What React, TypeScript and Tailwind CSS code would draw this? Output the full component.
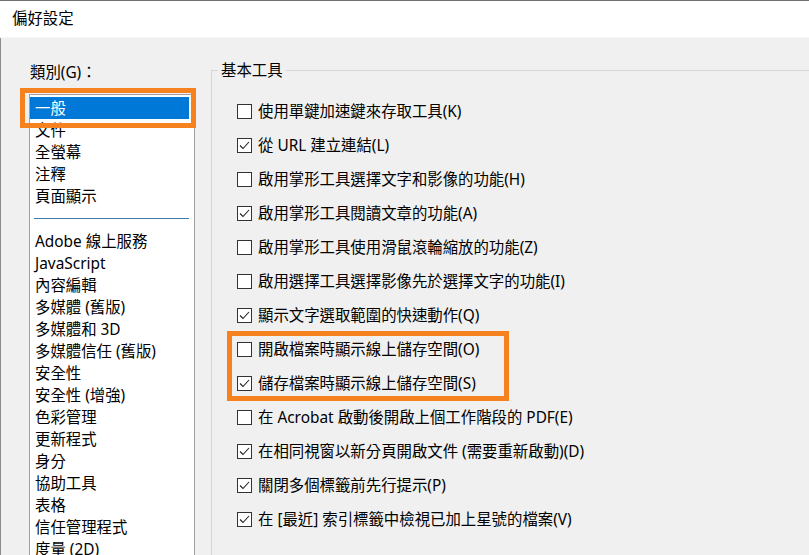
import React from "react";

const categories: (string | null)[] = [
  "一般",
  "文件",
  "全螢幕",
  "注釋",
  "頁面顯示",
  null,
  "Adobe 線上服務",
  "JavaScript",
  "內容編輯",
  "多媒體 (舊版)",
  "多媒體和 3D",
  "多媒體信任 (舊版)",
  "安全性",
  "安全性 (增強)",
  "色彩管理",
  "更新程式",
  "身分",
  "協助工具",
  "表格",
  "信任管理程式",
  "度量 (2D)",
];

interface Option {
  label: string;
  checked: boolean;
}

const options: Option[] = [
  { label: "使用單鍵加速鍵來存取工具(K)", checked: false },
  { label: "從 URL 建立連結(L)", checked: true },
  { label: "啟用掌形工具選擇文字和影像的功能(H)", checked: false },
  { label: "啟用掌形工具閱讀文章的功能(A)", checked: true },
  { label: "啟用掌形工具使用滑鼠滾輪縮放的功能(Z)", checked: false },
  { label: "啟用選擇工具選擇影像先於選擇文字的功能(I)", checked: false },
  { label: "顯示文字選取範圍的快速動作(Q)", checked: true },
  { label: "開啟檔案時顯示線上儲存空間(O)", checked: false },
  { label: "儲存檔案時顯示線上儲存空間(S)", checked: true },
  { label: "在 Acrobat 啟動後開啟上個工作階段的 PDF(E)", checked: false },
  { label: "在相同視窗以新分頁開啟文件 (需要重新啟動)(D)", checked: true },
  { label: "關閉多個標籤前先行提示(P)", checked: true },
  { label: "在 [最近] 索引標籤中檢視已加上星號的檔案(V)", checked: true },
];

function CheckRow({ label, checked }: Option) {
  return (
    <div className="flex h-[34px] items-center pl-[25px]">
      <div className="flex h-[15px] w-[15px] shrink-0 items-center justify-center border border-[#333333] bg-white">
        {checked && (
          <svg width="13" height="13" viewBox="0 0 13 13">
            <polyline points="2,6.5 5,9.5 11,3" fill="none" stroke="#222" strokeWidth="1.1" />
          </svg>
        )}
      </div>
      <span className="ml-[6px] translate-y-[1px] whitespace-nowrap text-[15.4px] leading-[22px] text-black">
        {label}
      </span>
    </div>
  );
}

export default function App() {
  return (
    <div
      className="flex h-[555px] w-[809px] flex-col overflow-hidden border-t border-[#6f6f6f] bg-[#f0f0f0] text-black"
      style={{ fontFamily: '"Noto Sans", "Noto Sans CJK TC", sans-serif' }}
    >
      {/* Title bar */}
      <div className="flex h-[37px] shrink-0 items-center border-b border-[#f6f6f6] bg-white pl-[12px] text-[15.4px]">
        偏好設定
      </div>

      {/* Body */}
      <div className="flex flex-1 border-l border-[#8c8c8c]">
        {/* Categories */}
        <div className="w-[210px] shrink-0 pl-[28px]">
          <div className="mt-[24px] pl-[1px] text-[15.4px] leading-[22px]">類別(G)：</div>
          <div className="relative mt-[10px]">
            <div className="h-[500px] w-[166px] border border-[#a0a0a0] bg-white pt-[2px]">
              {categories.map((c, i) =>
                c === null ? (
                  <div key={i} className="flex h-[23px] items-center pl-[4px] pr-[5px]">
                    <div className="h-px w-full bg-[#3a79a8]" />
                  </div>
                ) : (
                  <div
                    key={i}
                    className={`h-[22px] w-[159px] whitespace-nowrap pl-[5px] pt-[1px] text-[15.4px] leading-[22px] ${
                      i === 0 ? "bg-[#0078d7] text-white" : "text-black"
                    }`}
                  >
                    {c}
                  </div>
                )
              )}
            </div>
            {/* highlight */}
            <div className="absolute -left-[9px] -top-[6px] h-[40px] w-[176px] border-[5px] border-[#f5821f]" />
          </div>
        </div>

        {/* Basic tools group */}
        <div className="flex-1 pt-[32px]">
          <div className="relative -mr-[10px] h-[600px] border-l border-t border-[#d7d7d7]">
            <div className="absolute -top-[11px] left-[6px] bg-[#f0f0f0] px-[3px] text-[15.4px] leading-[22px]">
              基本工具
            </div>
            <div className="pt-[23px]">
              {options.slice(0, 7).map((o) => (
                <CheckRow key={o.label} {...o} />
              ))}
              <div className="relative">
                {options.slice(7, 9).map((o) => (
                  <CheckRow key={o.label} {...o} />
                ))}
                <div className="absolute -bottom-[1px] -top-[1px] left-[15px] w-[282px] border-[5px] border-[#f5821f]" />
              </div>
              {options.slice(9).map((o) => (
                <CheckRow key={o.label} {...o} />
              ))}
            </div>
          </div>
        </div>
      </div>
    </div>
  );
}
